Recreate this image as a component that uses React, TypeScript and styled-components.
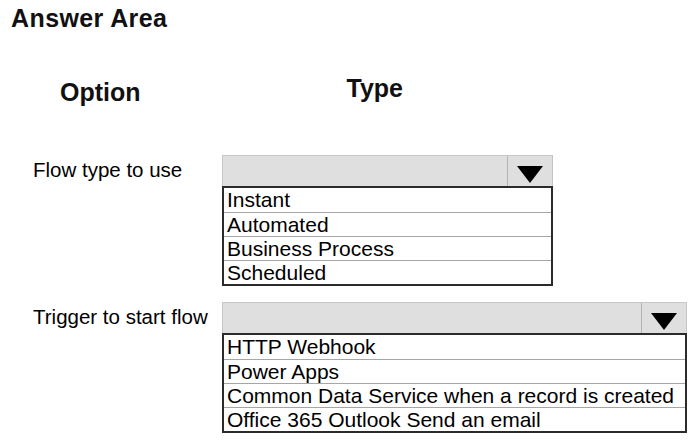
import React from "react";
import styled, { createGlobalStyle } from "styled-components";

const Global = createGlobalStyle`
  html, body {
    margin: 0;
    padding: 0;
    background: #ffffff;
  }
  body {
    font-family: "Liberation Sans", Arial, sans-serif;
    color: #000;
  }
`;

const Page = styled.div`
  width: 697px;
  height: 443px;
  box-sizing: border-box;
  padding: 4px 0 0 11px;
  display: flex;
  flex-direction: column;
  overflow: hidden;
`;

const Title = styled.h1`
  margin: 0;
  font-size: 25px;
  line-height: 29px;
  font-weight: 700;
  letter-spacing: 0.4px;
  color: #111;
`;

const HeaderRow = styled.div`
  display: flex;
  align-items: flex-start;
  margin-top: 41px;
`;

const Heading = styled.div<{ $left: number; $drop: number }>`
  margin-left: ${(p) => p.$left}px;
  padding-top: ${(p) => p.$drop}px;
  font-size: 25px;
  line-height: 29px;
  font-weight: 700;
  color: #111;
`;

const Rows = styled.div`
  display: flex;
  flex-direction: column;
  gap: 16px;
  margin-top: 48px;
  padding-left: 22px;
`;

const Row = styled.div`
  display: grid;
  grid-template-columns: 189px auto;
  align-items: start;
`;

const Label = styled.div`
  padding-top: 3px;
  font-size: 20.5px;
  line-height: 24px;
`;

const Select = styled.div<{ $width: number }>`
  width: ${(p) => p.$width}px;
  display: flex;
  flex-direction: column;
`;

const Bar = styled.div`
  height: 31px;
  box-sizing: border-box;
  display: flex;
  justify-content: flex-end;
  background: #dfdfdf;
  border: 1px solid #c6c6c6;
  border-bottom: none;
`;

const Toggle = styled.div`
  width: 45px;
  box-sizing: border-box;
  display: flex;
  align-items: flex-end;
  justify-content: center;
  padding-bottom: 3px;
  border-left: 1px solid #b4b4b4;
`;

const List = styled.div`
  border: 2px solid #2b2b2b;
  background: #ffffff;
`;

const Item = styled.div`
  height: 24px;
  box-sizing: border-box;
  padding: 0 3px;
  font-size: 21px;
  line-height: 23px;
  white-space: nowrap;
  & + & {
    border-top: 1px solid #a6a6a6;
  }
`;

const Arrow = () => (
  <svg width="26" height="17" viewBox="0 0 26 17" aria-hidden="true">
    <polygon points="0,0 26,0 13,17" fill="#000" />
  </svg>
);

type DropdownProps = { width: number; options: string[] };

const Dropdown = ({ width, options }: DropdownProps) => (
  <Select $width={width}>
    <Bar>
      <Toggle>
        <Arrow />
      </Toggle>
    </Bar>
    <List>
      {options.map((o) => (
        <Item key={o}>{o}</Item>
      ))}
    </List>
  </Select>
);

const rows = [
  {
    label: "Flow type to use",
    width: 331,
    options: ["Instant", "Automated", "Business Process", "Scheduled"],
  },
  {
    label: "Trigger to start flow",
    width: 465,
    options: [
      "HTTP Webhook",
      "Power Apps",
      "Common Data Service when a record is created",
      "Office 365 Outlook Send an email",
    ],
  },
];

export default function App() {
  return (
    <>
      <Global />
      <Page>
        <Title>Answer Area</Title>
        <HeaderRow>
          <Heading $left={49} $drop={4}>Option</Heading>
          <Heading $left={206} $drop={0}>Type</Heading>
        </HeaderRow>
        <Rows>
          {rows.map((r) => (
            <Row key={r.label}>
              <Label>{r.label}</Label>
              <Dropdown width={r.width} options={r.options} />
            </Row>
          ))}
        </Rows>
      </Page>
    </>
  );
}
